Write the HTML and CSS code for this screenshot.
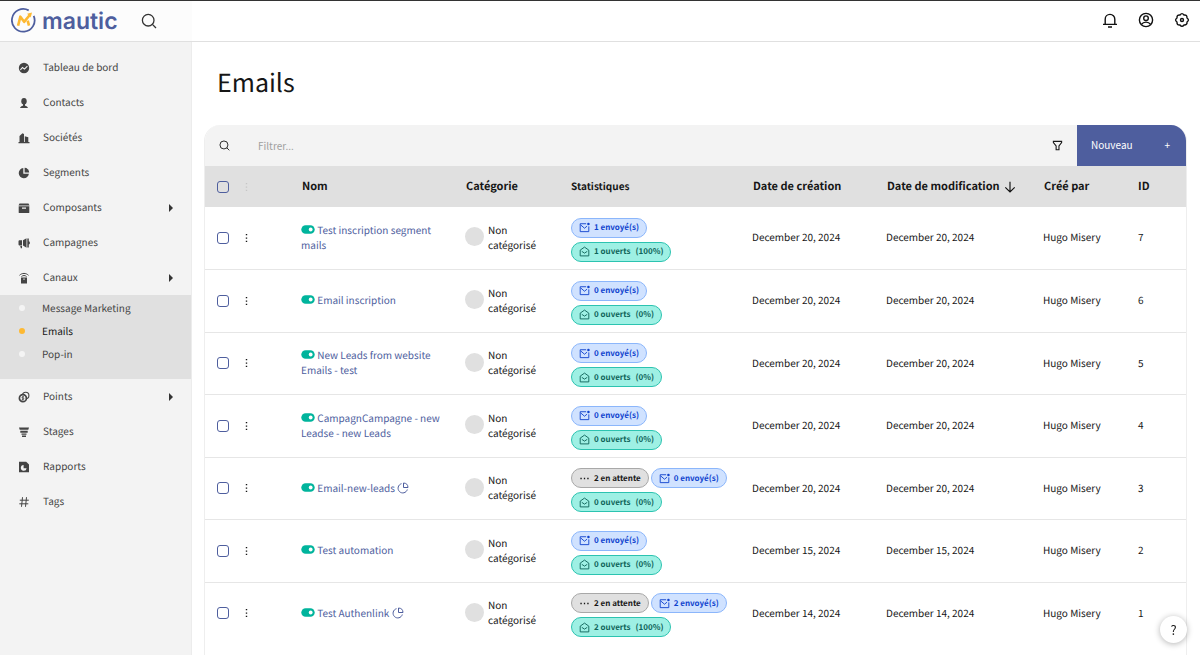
FILE: index.html
```html
<!DOCTYPE html>
<html lang="fr">
<head>
<meta charset="utf-8">
<title>Emails | Mautic</title>
<link rel="stylesheet" href="styles.css">
</head>
<body>
<svg class="sprite" aria-hidden="true">
  <symbol id="search" viewBox="0 0 16 16"><g fill="none" stroke="currentColor" stroke-width="1.3"><circle cx="7.2" cy="7.2" r="5.8"/><path d="M11.4 11.4l3.6 3.6"/></g></symbol>
  <symbol id="bell" viewBox="0 0 16 16"><path d="M3.2 12.4V7.2a4.8 4.8 0 0 1 9.6 0v5.2M1 12.4h14M6 15h4" fill="none" stroke="currentColor" stroke-width="1.4"/></symbol>
  <symbol id="user" viewBox="0 0 16 16"><g fill="none" stroke="currentColor" stroke-width="1.4"><circle cx="8" cy="8" r="6.6"/><circle cx="8" cy="6.2" r="2.3"/><path d="M3.4 12.4c1.200-1.700 2.800-2.300 4.600-2.300s3.400.6 4.600 2.300"/></g></symbol>
  <symbol id="gear" viewBox="0 0 16 16"><g fill="none" stroke="currentColor" stroke-width="1.4" stroke-linejoin="round"><path d="M6 3Q8 .2 10 3Q13.200 2.600 13 6Q15.800 8 13 10Q13.400 13.200 10 13Q8 15.800 6 13Q2.700 13.300 3 10Q.2 8 3 6Q2.700 2.700 6 3z"/><circle cx="8" cy="8" r="1.500"/></g></symbol>
  <symbol id="dash" viewBox="0 0 12 12"><circle cx="6" cy="6" r="5.200" fill="currentColor"/><path d="M2.400 7.800l2.100-2.300 2 1.600 2.900-3" fill="none" stroke="#f3f3f3" stroke-width="1.100"/></symbol>
  <symbol id="person" viewBox="0 0 12 12"><ellipse cx="6" cy="4.200" rx="2.700" ry="3.300" fill="currentColor"/><path d="M5 7h2v2H5zM2 11c.5-1.600 2-2.200 4-2.200s3.500.6 4 2.200z" fill="currentColor"/></symbol>
  <symbol id="building" viewBox="0 0 12 12"><path d="M.5 10h1V4l3-2.800L6 2v8h.800V4.200l3.500 1V10h1.200v1.200H.5z" fill="currentColor"/></symbol>
  <symbol id="pie" viewBox="0 0 12 12"><path d="M5.300 1.100v5.600h5.600A5.100 5.100 0 1 1 5.300 1.100z" fill="currentColor"/><path d="M6.600.8a4.700 4.700 0 0 1 4.600 4.600H6.600z" fill="currentColor"/></symbol>
  <symbol id="box" viewBox="0 0 12 12"><path d="M1.500 1.500h9l1 2H.5zM.7 4.200h10.600v6.300a.6.600 0 0 1-.6.600H1.300a.6.600 0 0 1-.6-.6zM4 5.500v1.200h4V5.500z" fill="currentColor" fill-rule="evenodd"/></symbol>
  <symbol id="horn" viewBox="0 0 12 12"><path d="M.5 4.500c0-.8.500-1.300 1.300-1.300H4v5.300H1.800C1 8.500.5 8 .5 7.200zM2.200 9H4v2.300H2.800zM5 3.200l3.500-2v9.600L5 8.500zM9.300 1.500h1.500v2.800a1.700 1.700 0 0 1 0 3.200v3H9.300z" fill="currentColor"/></symbol>
  <symbol id="remote" viewBox="0 0 12 12"><path d="M3 5.500h6v6H3zM5.400 6.500v1.200h1.200V6.500z" fill="currentColor" fill-rule="evenodd"/><path d="M1.500 3.300c2.500-2.500 6.500-2.500 9 0M3.500 4.500c1.500-1.300 3.500-1.300 5 0" fill="none" stroke="currentColor"/></symbol>
  <symbol id="coins" viewBox="0 0 12 12"><circle cx="7.700" cy="4.400" r="3.200" fill="none" stroke="currentColor" stroke-width="1.100"/><circle cx="4.900" cy="7.200" r="3.500" fill="#f3f3f3" stroke="currentColor" stroke-width="1.700"/><path d="M6 5.800H4.700a.6.600 0 0 0 0 1.300h.5a.6.600 0 0 1 0 1.300H3.800M4.900 5v4.500" fill="none" stroke="currentColor" stroke-width=".8"/></symbol>
  <symbol id="funnel" viewBox="0 0 12 12"><path d="M1 1.500h10l-.7 2.200H1.700zM2.300 4.700h7.400v2H2.300zM3.500 7.500h5v1.300h-5zM4 9.600h4v1.500H4z" fill="currentColor"/></symbol>
  <symbol id="report" viewBox="0 0 12 12"><path d="M1 .8h7.200L11 3.500v7.700H1z" fill="currentColor"/><path d="M5.600 4v3.200h3A2.900 2.900 0 1 1 5.600 4z" fill="#f3f3f3"/></symbol>
  <symbol id="hash" viewBox="0 0 12 12"><path d="M4.500 1.200l-1 9.600M8.500 1.200l-1 9.600M1.800 4.200h9M1.300 7.800h9" fill="none" stroke="currentColor"/></symbol>
  <symbol id="filter" viewBox="0 0 12 12"><path d="M1.500 1.500h9v1.300L7.600 6.500v4.200H4.500V6.500L1.500 2.800z" fill="none" stroke="currentColor" stroke-width="1.200"/></symbol>
  <symbol id="arrow" viewBox="0 0 12 12"><path d="M6 .8v10M1.300 6.300L6 11l4.700-4.700" fill="none" stroke="currentColor" stroke-width="1.200"/></symbol>
  <symbol id="more" viewBox="0 0 3 10"><path d="M.8 1h1.400v1.300H.8zM.8 4.400h1.400v1.300H.8zM.8 7.700h1.400V9H.8z" fill="currentColor"/></symbol>
  <symbol id="toggle" viewBox="0 0 14 9"><rect x=".3" y=".2" width="13.400" height="8.600" rx="4.300" fill="#00b49c"/><circle cx="9.700" cy="4.500" r="1.900" fill="#fff"/></symbol>
  <symbol id="chart" viewBox="0 0 12 12"><path d="M4.500 1.700A4.700 4.700 0 1 0 10.300 7.500M6.500 1v4.500H11A4.700 4.700 0 0 0 6.500 1z" fill="none" stroke="currentColor"/></symbol>
  <symbol id="sent" viewBox="0 0 12 12"><path d="M7.800 1.900H1.300v8.600h9.400V4.800M1.800 3.200l4.200 3.600 2.800-2.300" fill="none" stroke="currentColor"/><circle cx="10.300" cy="2.100" r="1.400" fill="currentColor"/></symbol>
  <symbol id="open" viewBox="0 0 12 12"><path d="M1.300 4.500L6 1.200l4.700 3.300v6.300H1.300zM3 5.800l3 2 3-2" fill="none" stroke="currentColor"/></symbol>
  <symbol id="dots" viewBox="0 0 12 12"><path d="M1.500 5.300H3v1.400H1.500zM5.300 5.300h1.400v1.400H5.300zM9 5.300h1.500v1.400H9z" fill="currentColor"/></symbol>
</svg>

<header class="topbar">
  <div class="brand">
    <a class="logo" href="#" aria-label="Mautic">
      <svg class="logo-mark" viewBox="0 0 24 24"><path d="M17 2.300A10.900 10.900 0 1 0 21.800 7.600" fill="none" stroke="#4e5e9e" stroke-width="1.700"/><path d="M6.800 17L9 8.300l3.600 5 6-7.300" fill="none" stroke="#fdb933" stroke-width="2.500" stroke-linejoin="round"/><path d="M16 12.200l1.300 4.800" stroke="#fdb933" stroke-width="2.500"/><path d="M15.500 5.600l4.700-1.400-1.400 4.800z" fill="#fdb933"/></svg>
      <span class="logo-text">mautic</span>
    </a>
    <button class="icon-button" aria-label="Rechercher"><svg class="icon-top"><use href="#search"/></svg></button>
  </div>
  <div class="tools">
    <button class="icon-button" aria-label="Notifications"><svg class="icon-top"><use href="#bell"/></svg></button>
    <button class="icon-button" aria-label="Compte"><svg class="icon-top"><use href="#user"/></svg></button>
    <button class="icon-button" aria-label="Paramètres"><svg class="icon-top"><use href="#gear"/></svg></button>
  </div>
</header>

<div class="shell">
  <nav class="sidebar">
    <a class="nav-item" href="#"><svg><use href="#dash"/></svg><span>Tableau de bord</span></a>
    <a class="nav-item" href="#"><svg><use href="#person"/></svg><span>Contacts</span></a>
    <a class="nav-item" href="#"><svg><use href="#building"/></svg><span>Sociétés</span></a>
    <a class="nav-item" href="#"><svg><use href="#pie"/></svg><span>Segments</span></a>
    <a class="nav-item" href="#"><svg><use href="#box"/></svg><span>Composants</span><i class="caret"></i></a>
    <a class="nav-item" href="#"><svg><use href="#horn"/></svg><span>Campagnes</span></a>
    <a class="nav-item" href="#"><svg><use href="#remote"/></svg><span>Canaux</span><i class="caret"></i></a>
    <div class="subnav">
      <a class="sub-item" href="#"><span>Message Marketing</span></a>
      <a class="sub-item current" href="#"><span>Emails</span></a>
      <a class="sub-item" href="#"><span>Pop-in</span></a>
    </div>
    <a class="nav-item" href="#"><svg><use href="#coins"/></svg><span>Points</span><i class="caret"></i></a>
    <a class="nav-item" href="#"><svg><use href="#funnel"/></svg><span>Stages</span></a>
    <a class="nav-item" href="#"><svg><use href="#report"/></svg><span>Rapports</span></a>
    <a class="nav-item" href="#"><svg><use href="#hash"/></svg><span>Tags</span></a>
  </nav>

  <main class="content">
    <h1>Emails</h1>
    <section class="panel">
      <div class="toolbar">
        <label class="search-label" for="filter-input" aria-label="Filtrer"><svg class="icon-small"><use href="#search"/></svg></label>
        <input class="filter-input" id="filter-input" type="text" placeholder="Filtrer...">
        <button class="filter-button" aria-label="Filtres"><svg class="icon-small"><use href="#filter"/></svg></button>
        <button class="new-button"><span>Nouveau</span><span>+</span></button>
      </div>
      <table class="emails">
        <colgroup><col class="c-check"><col class="c-more"><col class="c-name"><col class="c-cat"><col class="c-stat"><col class="c-date"><col class="c-mod"><col class="c-by"><col class="c-id"></colgroup>
        <thead>
          <tr>
            <th class="check"><input type="checkbox" aria-label="Tout sélectionner"></th>
            <th class="more faded"><svg><use href="#more"/></svg></th>
            <th>Nom</th><th>Catégorie</th><th class="th-stat">Statistiques</th><th>Date de création</th>
            <th>Date de modification <svg class="sort"><use href="#arrow"/></svg></th><th>Créé par</th><th>ID</th>
          </tr>
        </thead>
        <tbody>
          <tr>
            <td class="check"><input type="checkbox" aria-label="Sélectionner 7"></td>
            <td class="more"><button aria-label="Actions"><svg><use href="#more"/></svg></button></td>
            <td><svg class="toggle"><use href="#toggle"/></svg> <a href="#">Test inscription segment mails</a></td>
            <td><div class="category"><i></i><span>Non catégorisé</span></div></td>
            <td class="stat"><div class="badges"><span class="badge sent"><svg><use href="#sent"/></svg>1 envoyé(s)</span><span class="badge open"><svg><use href="#open"/></svg>1 ouverts <span>(100%)</span></span></div></td>
            <td>December 20, 2024</td><td>December 20, 2024</td><td>Hugo Misery</td><td class="id">7</td>
          </tr>
          <tr>
            <td class="check"><input type="checkbox" aria-label="Sélectionner 6"></td>
            <td class="more"><button aria-label="Actions"><svg><use href="#more"/></svg></button></td>
            <td><svg class="toggle"><use href="#toggle"/></svg> <a href="#">Email inscription</a></td>
            <td><div class="category"><i></i><span>Non catégorisé</span></div></td>
            <td class="stat"><div class="badges"><span class="badge sent"><svg><use href="#sent"/></svg>0 envoyé(s)</span><span class="badge open"><svg><use href="#open"/></svg>0 ouverts <span>(0%)</span></span></div></td>
            <td>December 20, 2024</td><td>December 20, 2024</td><td>Hugo Misery</td><td class="id">6</td>
          </tr>
          <tr>
            <td class="check"><input type="checkbox" aria-label="Sélectionner 5"></td>
            <td class="more"><button aria-label="Actions"><svg><use href="#more"/></svg></button></td>
            <td><svg class="toggle"><use href="#toggle"/></svg> <a href="#">New Leads from website Emails - test</a></td>
            <td><div class="category"><i></i><span>Non catégorisé</span></div></td>
            <td class="stat"><div class="badges"><span class="badge sent"><svg><use href="#sent"/></svg>0 envoyé(s)</span><span class="badge open"><svg><use href="#open"/></svg>0 ouverts <span>(0%)</span></span></div></td>
            <td>December 20, 2024</td><td>December 20, 2024</td><td>Hugo Misery</td><td class="id">5</td>
          </tr>
          <tr>
            <td class="check"><input type="checkbox" aria-label="Sélectionner 4"></td>
            <td class="more"><button aria-label="Actions"><svg><use href="#more"/></svg></button></td>
            <td><svg class="toggle"><use href="#toggle"/></svg> <a href="#">CampagnCampagne - new Leadse - new Leads</a></td>
            <td><div class="category"><i></i><span>Non catégorisé</span></div></td>
            <td class="stat"><div class="badges"><span class="badge sent"><svg><use href="#sent"/></svg>0 envoyé(s)</span><span class="badge open"><svg><use href="#open"/></svg>0 ouverts <span>(0%)</span></span></div></td>
            <td>December 20, 2024</td><td>December 20, 2024</td><td>Hugo Misery</td><td class="id">4</td>
          </tr>
          <tr>
            <td class="check"><input type="checkbox" aria-label="Sélectionner 3"></td>
            <td class="more"><button aria-label="Actions"><svg><use href="#more"/></svg></button></td>
            <td><svg class="toggle"><use href="#toggle"/></svg> <a href="#">Email-new-leads <svg class="chart"><use href="#chart"/></svg></a></td>
            <td><div class="category"><i></i><span>Non catégorisé</span></div></td>
            <td class="stat"><div class="badges"><span class="badge pending"><svg><use href="#dots"/></svg>2 en attente</span><span class="badge sent"><svg><use href="#sent"/></svg>0 envoyé(s)</span><span class="badge open"><svg><use href="#open"/></svg>0 ouverts <span>(0%)</span></span></div></td>
            <td>December 20, 2024</td><td>December 20, 2024</td><td>Hugo Misery</td><td class="id">3</td>
          </tr>
          <tr>
            <td class="check"><input type="checkbox" aria-label="Sélectionner 2"></td>
            <td class="more"><button aria-label="Actions"><svg><use href="#more"/></svg></button></td>
            <td><svg class="toggle"><use href="#toggle"/></svg> <a href="#">Test automation</a></td>
            <td><div class="category"><i></i><span>Non catégorisé</span></div></td>
            <td class="stat"><div class="badges"><span class="badge sent"><svg><use href="#sent"/></svg>0 envoyé(s)</span><span class="badge open"><svg><use href="#open"/></svg>0 ouverts <span>(0%)</span></span></div></td>
            <td>December 15, 2024</td><td>December 15, 2024</td><td>Hugo Misery</td><td class="id">2</td>
          </tr>
          <tr>
            <td class="check"><input type="checkbox" aria-label="Sélectionner 1"></td>
            <td class="more"><button aria-label="Actions"><svg><use href="#more"/></svg></button></td>
            <td><svg class="toggle"><use href="#toggle"/></svg> <a href="#">Test Authenlink <svg class="chart"><use href="#chart"/></svg></a></td>
            <td><div class="category"><i></i><span>Non catégorisé</span></div></td>
            <td class="stat"><div class="badges"><span class="badge pending"><svg><use href="#dots"/></svg>2 en attente</span><span class="badge sent"><svg><use href="#sent"/></svg>2 envoyé(s)</span><span class="badge open"><svg><use href="#open"/></svg>2 ouverts <span>(100%)</span></span></div></td>
            <td>December 14, 2024</td><td>December 14, 2024</td><td>Hugo Misery</td><td class="id">1</td>
          </tr>
        </tbody>
      </table>
    </section>
  </main>
</div>
<button class="help" aria-label="Aide">?</button>
</body>
</html>
```

FILE: styles.css
```css
* { box-sizing: border-box; }
html, body { height: 100%; }
body {
  margin: 0;
  display: flex;
  flex-direction: column;
  background: #fff;
  color: #161616;
  font: 10px/15px "Noto Sans CJK SC", "Noto Sans", sans-serif;
  text-rendering: geometricPrecision;
}
.sprite { display: none; }
a { color: #4e5e9e; text-decoration: none; }
button { border: 0; padding: 0; background: none; color: inherit; font: inherit; }

.topbar {
  display: flex;
  justify-content: space-between;
  flex: none;
  height: 42px;
  border-top: 1px solid #333;
  border-bottom: 1px solid #e0e0e0;
}
.brand {
  display: flex;
  align-items: center;
  gap: 23px;
  width: 192px;
  padding: 0 0 1px 11px;
  background: #fcfcfc;
}
.logo { display: flex; align-items: center; gap: 6px; }
.logo-mark { width: 25px; height: 25px; }
.logo-text { font: 600 23px/28px Inter, sans-serif; }
.tools { display: flex; align-items: center; gap: 20px; padding: 0 10px 2px 0; }
.icon-button { display: flex; color: #333; }
.icon-top { width: 16px; height: 16px; }
.tools .icon-button { color: #111; }

.shell { display: flex; flex: 1; }
.sidebar {
  flex: none;
  width: 192px;
  padding-top: 8px;
  border-right: 1px solid #ececec;
  background: #f3f3f3;
}
.nav-item {
  display: flex;
  align-items: center;
  height: 35px;
  padding: 0 18px;
  color: #444;
}
.nav-item svg { width: 12px; height: 12px; margin-right: 13px; }
.nav-item span { flex: 1; padding-bottom: 2px; }
.caret { border: solid transparent; border-width: 4px 0 4px 4px; border-left-color: #333; }
.subnav { height: 84px; padding-top: 1px; background: #e0e0e0; }
.sub-item {
  display: flex;
  align-items: center;
  height: 23px;
  padding-left: 19px;
  color: #444;
}
.sub-item span { padding-bottom: 1px; }
.sub-item::before {
  content: "";
  width: 6px;
  height: 6px;
  margin-right: 17px;
  border-radius: 50%;
  background: #f4f4f4;
}
.sub-item.current { color: #161616; }
.sub-item.current::before { background: #fdb933; }

.content { display: flex; flex-direction: column; flex: 1; min-width: 0; padding: 21px 13px 0 12px; }
h1 { margin: 0; padding-left: 13px; font-size: 25px; line-height: 38px; font-weight: 400; }
.panel {
  flex: 1;
  margin-top: 24px;
  border: solid #eee;
  border-width: 0 1px;
  border-radius: 16px 16px 0 0;
  overflow: hidden;
}
.toolbar { display: flex; height: 41px; background: #f3f3f3; }
.search-label { display: flex; align-items: center; padding: 0 14px; }
.icon-small { width: 11px; height: 11px; }
.filter-input {
  flex: 1;
  min-width: 0;
  padding: 0 14px 1px;
  border: 0;
  background: transparent;
  color: #161616;
  font: inherit;
}
.filter-input::placeholder { color: #a0a0a0; opacity: 1; }
.filter-button { display: flex; align-items: center; padding: 0 14px; }
.new-button {
  display: flex;
  align-items: center;
  justify-content: space-between;
  width: 109px;
  padding: 0 16px 2px 14px;
  background: #4e5e9e;
  color: #fff;
}

.emails { width: 100%; table-layout: fixed; border-collapse: collapse; }
.c-check { width: 36px; }
.c-more { width: 52px; }
.c-name { width: 164px; }
.c-cat { width: 106px; }
.c-stat { width: 181px; }
.c-date { width: 134px; }
.c-mod { width: 157px; }
.c-by { width: 94px; }
.c-id { width: 58px; }
th { height: 41px; padding: 0 0 1px 9px; background: #e0e0e0; text-align: left; font-size: 11px; font-weight: 700; white-space: nowrap; }
.th-stat { padding: 0 0 2px 8px; font-size: 10px; }
td { height: 62px; padding: 0 8px 2px; border-bottom: 1px solid #e6e6e6; }
tbody tr:nth-child(even) td { height: 63px; }
tbody tr:last-child td { border-bottom: 0; }
.check { padding: 0 0 0 12px; }
.more { padding: 0 0 0 4px; }
.id { padding-left: 9px; }
.check input {
  display: block;
  appearance: none;
  width: 12px;
  height: 12px;
  margin: 0;
  border: 1px solid #4e5e9e;
  border-radius: 3px;
}
.more button { display: block; }
.more svg { display: block; width: 3px; height: 10px; }
.faded { color: #c6c6c6; }
.sort { width: 12px; height: 12px; margin-left: 2px; vertical-align: middle; }
.toggle { width: 14px; height: 9px; }
.chart { width: 12px; height: 12px; vertical-align: -2px; }
.category { display: flex; align-items: center; gap: 4px; padding-right: 24px; }
.category i { flex: none; width: 19px; height: 19px; border-radius: 50%; background: #e0e0e0; }
.stat { padding: 4px 0 0 8px; }
.badges { display: flex; flex-wrap: wrap; gap: 4px 2px; padding-right: 12px; }
.badge {
  display: flex;
  align-items: center;
  height: 20px;
  padding: 0 7px;
  border: 1px solid;
  border-radius: 10px;
  font-size: 8px;
  font-weight: 700;
  white-space: nowrap;
}
.badge svg { width: 11px; height: 11px; margin-right: 4px; }
.badge span { margin-left: 5px; }
.sent { background: #d0e2ff; border-color: #8bb6fb; color: #0f43ce; }
.open { background: #9ef0e4; border-color: #2cc3b0; color: #0e6359; }
.pending { background: #e0e0e0; border-color: #a8a8a8; color: #161616; }

.help {
  position: fixed;
  right: 13px;
  bottom: 12px;
  width: 27px;
  height: 27px;
  border-radius: 50%;
  background: #fff;
  box-shadow: 0 1px 6px rgba(0, 0, 0, .3);
  font-size: 13px;
}
```
